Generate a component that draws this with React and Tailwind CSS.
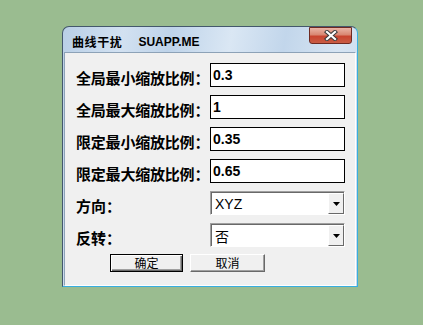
import React from 'react';

const cjk = { fontFamily: '"Noto Sans CJK SC", "Noto Sans", sans-serif' };
const latin = { fontFamily: '"Liberation Sans", Arial, sans-serif' };

function TextRow({ label, value }) {
    return (
        <div className="flex items-center h-[24px]">
            <div className="w-[134px] shrink-0 whitespace-nowrap text-[15px] font-bold leading-none pt-[4px] text-black tracking-[-0.2px]" style={cjk}>
                {label}
            </div>
            <div className="w-[135px] h-[24px] border border-black bg-white flex items-center pl-[2px] text-[14px] font-bold text-black leading-none" style={latin}>
                {value}
            </div>
        </div>
    );
}

function ComboRow({ label, value, cjkValue }) {
    return (
        <div className="flex items-center h-[24px]">
            <div className="w-[134px] shrink-0 whitespace-nowrap text-[15px] font-bold leading-none pt-[4px] text-black" style={cjk}>
                {label}
            </div>
            <div className="w-[135px] h-[24px] flex border border-t-[#a0a0a0] border-l-[#a0a0a0] border-r-white border-b-white shadow-[inset_1px_1px_0_#696969] bg-white pt-[1px] pl-[1px]">
                <div className="flex-1 flex items-center pl-[3px] text-[14px] text-black leading-none" style={cjkValue ? cjk : latin}>
                    {value}
                </div>
                <div className="w-[16px] h-full bg-[#f0f0f0] border border-t-white border-l-white border-r-[#696969] border-b-[#696969] flex items-center justify-center">
                    <svg width="7" height="4" viewBox="0 0 7 4">
                        <path d="M0 0 H7 L3.5 4 Z" fill="#000" />
                    </svg>
                </div>
            </div>
        </div>
    );
}

export default function App() {
    return (
        <div className="w-[423px] h-[325px] bg-[#9abc90] pt-[26px] pl-[62px]">
            <div className="w-[296px] h-[261px] flex flex-col rounded-t-[7px] border border-[#44586c] border-r-[#38aee0] border-b-[#38aee0] bg-[linear-gradient(100deg,#b9cfe6_0%,#d2e1f1_18%,#bed3e9_32%,#dae7f4_50%,#c2d6eb_66%,#d6e4f2_82%,#c7d9ed_100%)]">
                {/* barra de título */}
                <div className="h-[25px] flex items-start pl-[9px] pr-[5px]">
                    <div className="flex items-center pt-[9px] text-[12px] font-bold text-black leading-none">
                        <span className="tracking-[0.6px]" style={cjk}>曲线干扰</span>
                        <span className="ml-[16px]" style={latin}>SUAPP.ME</span>
                    </div>
                    <div className="ml-auto w-[43px] h-[17px] rounded-b-[3px] border border-[#6e2a22] bg-[linear-gradient(180deg,#eab4a6_0%,#d98772_45%,#c9442f_55%,#c95c44_100%)] flex items-center justify-center">
                        <svg width="14" height="11" viewBox="0 0 14 11">
                            <path d="M3 2 L11 9 M11 2 L3 9" stroke="#3b3b3b" strokeWidth="4.2" strokeLinecap="square" />
                            <path d="M3 2 L11 9 M11 2 L3 9" stroke="#ffffff" strokeWidth="2.2" strokeLinecap="square" />
                        </svg>
                    </div>
                </div>

                {/* conteúdo */}
                <div className="flex-1 ml-[1px] mr-[1px] border border-[#8da2b7] border-r-white border-b-white bg-[#f0f0f0] pt-[10px] pl-[11px] flex flex-col gap-[8px]">
                    <TextRow label="全局最小缩放比例：" value="0.3" />
                    <TextRow label="全局最大缩放比例：" value="1" />
                    <TextRow label="限定最小缩放比例：" value="0.35" />
                    <TextRow label="限定最大缩放比例：" value="0.65" />
                    <ComboRow label="方向：" value="XYZ" />
                    <ComboRow label="反转：" value="否" cjkValue />

                    <div className="flex gap-[7px] ml-[34px] -mt-[1px]">
                        <button className="w-[73px] h-[18px] border border-black bg-[#f0f0f0] shadow-[inset_1px_1px_0_#fff,inset_-1px_-1px_0_#696969,inset_-2px_-2px_0_#a0a0a0] text-[12px] text-black leading-none" style={cjk}>
                            确定
                        </button>
                        <button className="w-[75px] h-[18px] border border-t-white border-l-white border-r-[#696969] border-b-[#696969] bg-[#f0f0f0] shadow-[inset_-1px_-1px_0_#a0a0a0] text-[12px] text-black leading-none" style={cjk}>
                            取消
                        </button>
                    </div>
                </div>
            </div>
        </div>
    );
}
